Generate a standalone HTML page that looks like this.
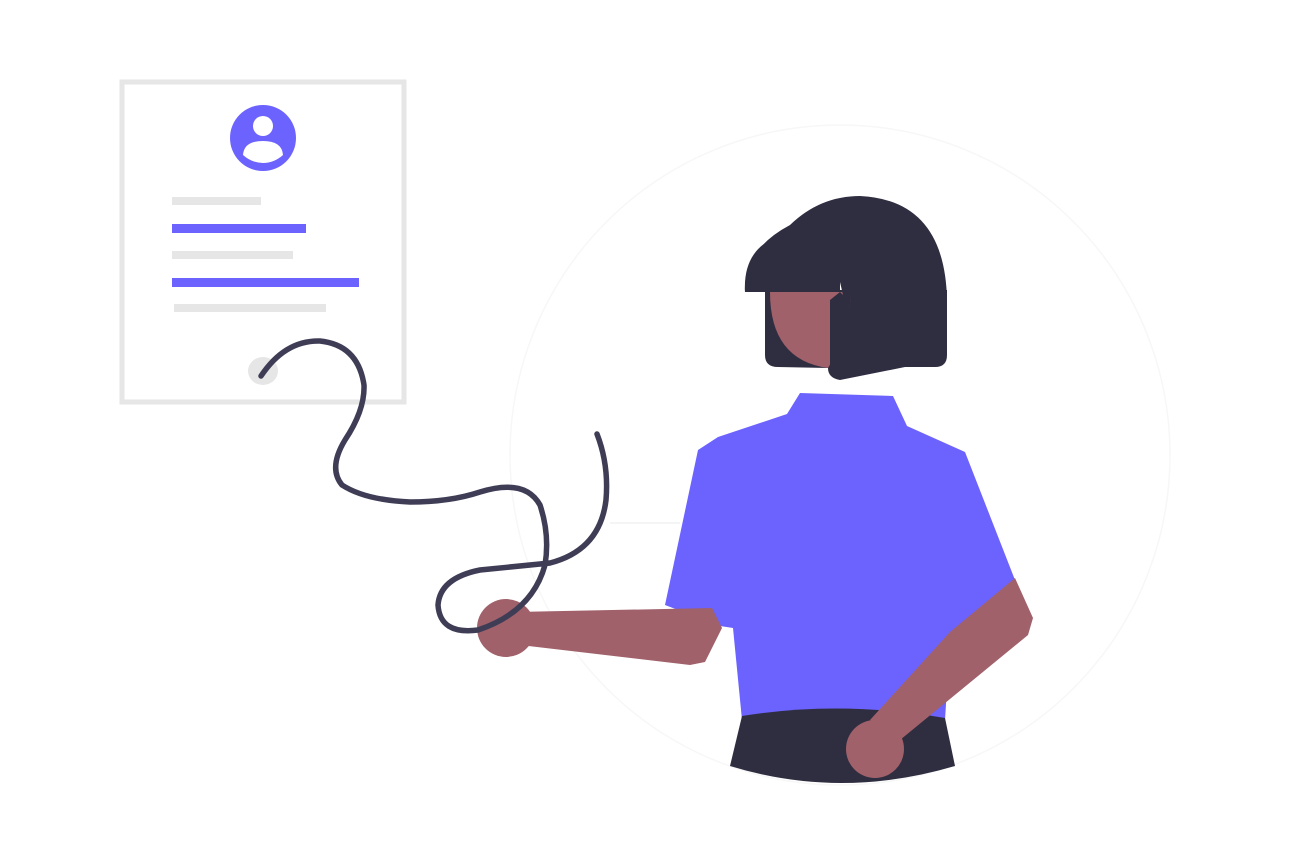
<!DOCTYPE html>
<html><head><style>html,body{margin:0;padding:0;background:#fff;width:1291px;height:864px;overflow:hidden}</style></head>
<body>
<svg width="1291" height="864" viewBox="0 0 1291 864" xmlns="http://www.w3.org/2000/svg">
<circle cx="840" cy="455" r="330" fill="none" stroke="#f7f7f7" stroke-width="1.5"/>
<line x1="610" y1="523" x2="680" y2="523" stroke="#f5f5f5" stroke-width="2"/>
<rect x="122" y="82" width="282" height="320" fill="#fff" stroke="#e6e6e6" stroke-width="5"/>
<circle cx="263" cy="138" r="33" fill="#6c63ff"/>
<circle cx="263" cy="126" r="10" fill="#fff"/>
<path d="M243 155 Q244 141 263 141 Q282 141 283 155 Q274 163 263 163 Q252 163 243 155Z" fill="#fff"/>
<rect x="172" y="197" width="89" height="8" fill="#e6e6e6"/>
<rect x="172" y="224" width="134" height="9" fill="#6c63ff"/>
<rect x="172" y="251" width="121" height="8" fill="#e6e6e6"/>
<rect x="172" y="278" width="187" height="9" fill="#6c63ff"/>
<rect x="174" y="304" width="152" height="8" fill="#e6e6e6"/>
<ellipse cx="263" cy="371" rx="15" ry="14" fill="#e6e6e6"/>
<path d="M800 393 L893 396 L907 426 L965 452 L1015 580 L950 640 L945 720 L742 720 L733 628 L720 626 L665 605 L698 450 L718 437 L787 414Z" fill="#6c63ff"/>
<path d="M742 716 Q840 700 945 718 L955 766 Q840 800 730 766Z" fill="#2f2e41"/>
<path d="M515 612 L712 608 L722 628 L705 662 L690 665 L520 645Z" fill="#a0616a"/>
<circle cx="506" cy="628" r="29" fill="#a0616a"/>
<path d="M1015 578 L1033 618 L1028 635 L900 740 L870 720 L950 632Z" fill="#a0616a"/>
<circle cx="875" cy="749" r="29" fill="#a0616a"/>
<path d="M765 290 L947 290 L947 355 Q947 367 935 367 L905 367 L840 380 Q828 378 828 368 L778 367 Q765 367 765 355Z" fill="#2f2e41"/>
<path d="M770 292 L850 292 Q852 330 828 368 Q770 360 770 292Z" fill="#a0616a"/>
<path d="M745 292 Q743 250 790 225 Q820 196 860 196 Q945 200 947 300 L850 294 Q852 330 830 370 L830 300 L840 292 L843 295 L840 282 Z M745 292 L840 292 L838 282Z" fill="#2f2e41"/>
<path d="M745 292 Q743 255 770 240 L840 280 L840 292Z" fill="#2f2e41"/>
<path d="M261 376 Q285 340 320 341 Q358 345 364 385 Q365 410 345 440 Q328 468 342 485 Q365 500 410 502 Q450 502 480 492 Q525 478 540 505 Q550 535 545 565 Q532 612 478 630 Q440 635 438 605 Q440 578 480 570 Q520 566 550 563 Q600 550 606 500 Q609 465 597 434" fill="none" stroke="#3f3d56" stroke-width="5.5" stroke-linecap="round"/>
</svg>
</body></html>
